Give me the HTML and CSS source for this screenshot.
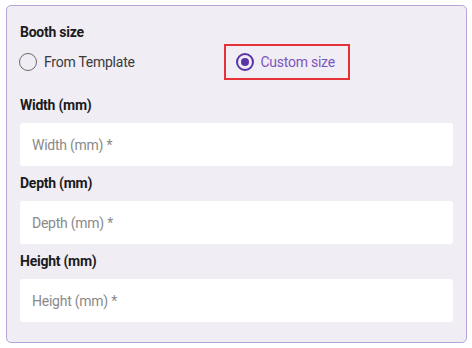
FILE: index.html
```html
<!DOCTYPE html>
<html lang="en">
<head>
    <meta charset="UTF-8">
    <meta name="viewport" content="width=device-width, initial-scale=1.0">
    <title>Booth size</title>
    <link rel="stylesheet" href="styles.css">
</head>
<body>
    <div class="panel">
        <div class="section-title">Booth size</div>
        <div class="radio-row">
            <label class="option">
                <input type="radio" name="boothSize" value="template">
                <span class="dot"></span>
                <span>From Template</span>
            </label>
            <label class="option selected highlight">
                <input type="radio" name="boothSize" value="custom" checked>
                <span class="dot"></span>
                <span>Custom size</span>
            </label>
        </div>

        <div class="field">
            <label for="width">Width (mm)</label>
            <input type="number" id="width" placeholder="Width (mm) *">
        </div>
        <div class="field">
            <label for="depth">Depth (mm)</label>
            <input type="number" id="depth" placeholder="Depth (mm) *">
        </div>
        <div class="field">
            <label for="height">Height (mm)</label>
            <input type="number" id="height" placeholder="Height (mm) *">
        </div>
    </div>
</body>
</html>
```

FILE: styles.css
```css
body {
    margin: 0;
    background: #ffffff;
    font-family: Roboto, "Liberation Sans", sans-serif;
    letter-spacing: -0.25px;
    color: #1b1b1b;
}
.panel {
    margin: 5px 5px 5px 6px;
    height: 338px;
    box-sizing: border-box;
    padding: 16px 13px 20px 13px;
    background: #f0edf5;
    border: 1px solid #b6a3d8;
    border-radius: 5px;
}
.section-title {
    font-size: 14px;
    font-weight: bold;
    line-height: 20px;
}
.radio-row {
    display: grid;
    grid-template-columns: 1fr 1fr;
    margin-top: 2px;
    height: 36px;
    align-items: center;
}
.option {
    display: inline-flex;
    align-items: center;
    font-size: 14px;
    color: #3a3a3a;
    cursor: pointer;
    justify-self: start;
}
.option input {
    display: none;
}
.dot {
    width: 18px;
    height: 18px;
    box-sizing: border-box;
    border: 1.5px solid #6b6b6b;
    border-radius: 50%;
    margin-right: 7px;
    margin-left: -1px;
    position: relative;
}
.selected {
    color: #7b55bd;
}
.selected .dot {
    border: 2px solid #5a34a6;
}
.selected .dot::after {
    content: "";
    position: absolute;
    left: 3px;
    top: 3px;
    width: 8px;
    height: 8px;
    border-radius: 50%;
    background: #5a34a6;
}
.highlight {
    height: 36px;
    box-sizing: border-box;
    border: 2px solid #e53238;
    padding: 0 13px 0 11px;
    margin-left: -13px;
}
.field {
    margin-top: 15px;
}
.field + .field {
    margin-top: 7px;
}
.field label {
    display: block;
    font-size: 14px;
    font-weight: bold;
    line-height: 20px;
    margin-bottom: 8px;
}
.field input {
    display: block;
    width: 100%;
    height: 43px;
    box-sizing: border-box;
    padding: 0 12px;
    border: none;
    border-radius: 3px;
    background: #ffffff;
    font-family: inherit;
    font-size: 14px;
    letter-spacing: inherit;
    outline: none;
}
.field input::placeholder {
    color: #8a8a8a;
}
```
